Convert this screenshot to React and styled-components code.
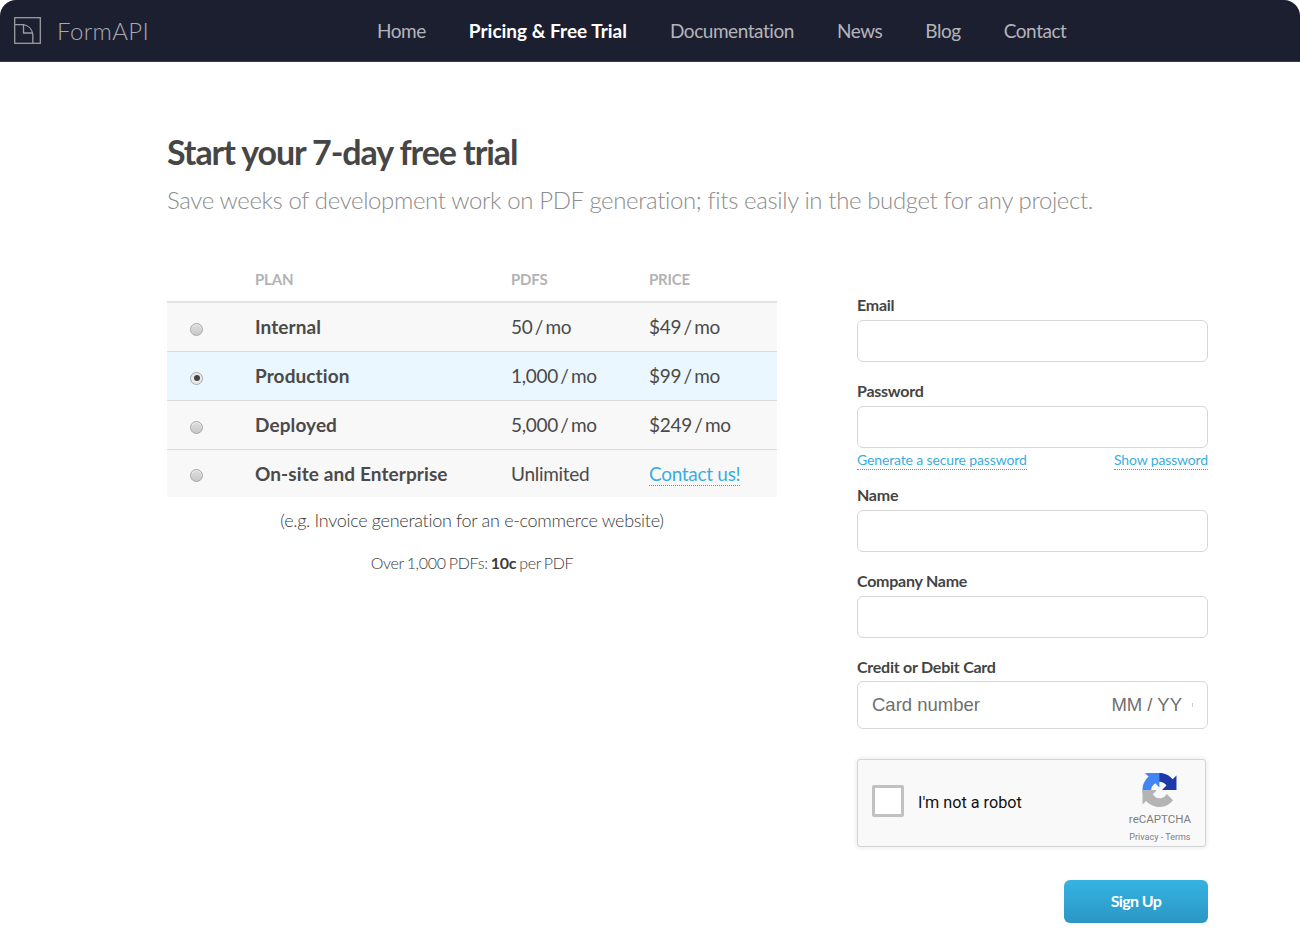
import React from "react";
import styled, { createGlobalStyle } from "styled-components";

const GlobalStyle = createGlobalStyle`
  html, body { margin: 0; padding: 0; background: #fff; }
  body { font-family: "Lato", "Open Sans", sans-serif; color: #444; }
  * { box-sizing: border-box; }
`;

const Page = styled.div`
  width: 1300px;
  height: 942px;
  overflow: hidden;
`;

// navbar
const NavBar = styled.header`
  height: 62px;
  background: #1c1f30;
  border-bottom: 1px solid #3a3c4b;
  border-radius: 16px 16px 0 0;
  display: flex;
  align-items: center;
  padding-left: 14px;
`;

const Brand = styled.div`
  width: 363px;
  display: flex;
  align-items: center;
  gap: 16px;
  color: #a9aab1;
  font-size: 24px;
  font-weight: 300;
  letter-spacing: 0.35px;
`;

const NavLinks = styled.nav`
  display: flex;
  gap: 43px;
`;

const NavLink = styled.a`
  font-size: 19px;
  letter-spacing: ${(p) => (p.$active ? "0" : "-0.45px")};
  font-weight: ${(p) => (p.$active ? 700 : 400)};
  color: ${(p) => (p.$active ? "#fff" : "#b4b5bb")};
`;

const Main = styled.main`
  padding: 68px 0 0 167px;
`;

const Title = styled.h1`
  margin: 0;
  font-size: 34px;
  line-height: 44px;
  font-weight: 700;
  color: #464646;
  letter-spacing: -1.07px;
`;

const Subtitle = styled.p`
  margin: 9px 0 0;
  font-size: 24px;
  line-height: 34px;
  font-weight: 300;
  color: #8c8c8c;
  letter-spacing: -0.38px;
`;

const Columns = styled.div`
  display: flex;
  align-items: flex-start;
  gap: 80px;
  margin-top: 43px;
`;

// pricing table
const PlanColumn = styled.section`
  width: 610px;
`;

const PlanTable = styled.table`
  width: 610px;
  border-collapse: collapse;
  table-layout: fixed;
`;

const HeadCell = styled.th`
  height: 42px;
  padding: 0 0 3px;
  text-align: left;
  font-size: 15px;
  font-weight: 700;
  color: #b3b3b3;
  text-transform: uppercase;
  letter-spacing: -0.2px;
  border-bottom: 2px solid #e4e4e4;
  vertical-align: middle;
`;

const Row = styled.tr`
  height: 49px;
  background: ${(p) => (p.$selected ? "#eaf7fe" : "#f8f8f8")};
  border-bottom: 1px solid #dcdcdc;
  &:last-child {
    height: 48px;
    border-bottom: 0;
  }
`;

const Cell = styled.td`
  padding: 0;
  font-size: 19px;
  font-weight: ${(p) => (p.$bold ? 700 : 400)};
  color: #4a4a4a;
  letter-spacing: ${(p) => (p.$bold ? "0.1px" : "-0.3px")};
  word-spacing: ${(p) => (p.$bold ? "0" : "-2.2px")};
`;

const RadioCell = styled.td`
  padding: 5px 0 0 23px;
`;

const Radio = styled.span`
  display: block;
  width: 13px;
  height: 13px;
  border-radius: 50%;
  border: 1px solid #a8a8a8;
  background: linear-gradient(#dedede, #c9c9c9);
  box-shadow: inset 0 1px 1px #eee;
  position: relative;
  ${(p) =>
    p.$checked &&
    `background: #e9e9e9;
     &::after {
       content: "";
       position: absolute;
       left: 2.5px;
       top: 2.5px;
       width: 6px;
       height: 6px;
       border-radius: 50%;
       background: #444;
     }`}
`;

const TextLink = styled.a`
  color: #38ade0;
  border-bottom: 1px dotted #2fa8dc;
  word-spacing: 0;
`;

const Note = styled.p`
  margin: ${(p) => p.$top}px 0 0;
  text-align: center;
  font-size: ${(p) => p.$size}px;
  line-height: 22px;
  font-weight: 300;
  color: #3c3c3c;
  letter-spacing: ${(p) => p.$track}px;
  word-spacing: ${(p) => p.$words}px;
  b { font-weight: 700; }
`;

// signup form
const Form = styled.form`
  width: 351px;
  padding-top: 34px;
`;

const Field = styled.div`
  margin-bottom: ${(p) => p.$gap ?? 18}px;
`;

const Label = styled.label`
  display: block;
  font-size: 16px;
  line-height: 22px;
  font-weight: 700;
  color: #444;
  letter-spacing: -0.25px;
  margin-bottom: 4px;
`;

const Input = styled.input`
  display: block;
  width: 351px;
  height: 42px;
  border: 1px solid #d6d6d6;
  border-radius: 6px;
  background: #fff;
  outline: 0;
`;

const PasswordLinks = styled.div`
  display: flex;
  justify-content: space-between;
  font-size: 14px;
  line-height: 19px;
  margin-top: 2px;
  letter-spacing: -0.14px;
`;

const CardBox = styled.div`
  height: 48px;
  margin-top: -1px;
  border: 1px solid #d6d6d6;
  border-radius: 6px;
  display: flex;
  align-items: center;
  padding: 0 14px;
  font-family: "Liberation Sans", sans-serif;
  font-size: 18.5px;
  color: #6f6f6f;
`;

const CardNumber = styled.span`
  flex: 1;
`;

const CardClip = styled.span`
  width: 1px;
  height: 4px;
  margin-left: 10px;
  background: #cfcfcf;
`;

const Captcha = styled.div`
  width: 349px;
  height: 88px;
  margin-top: 30px;
  background: #f9f9f9;
  border: 1px solid #d3d3d3;
  border-radius: 3px;
  box-shadow: 0 0 4px 1px rgba(0, 0, 0, 0.08);
  display: flex;
  align-items: center;
  padding: 0 14px;
  font-family: "Roboto", "Liberation Sans", sans-serif;
`;

const CaptchaBox = styled.span`
  width: 32px;
  height: 32px;
  margin-top: -4px;
  background: #fff;
  border: 3px solid #c1c1c1;
  border-radius: 2px;
`;

const CaptchaLabel = styled.span`
  margin: -2px 0 0 14px;
  font-size: 16.2px;
  color: #111;
  flex: 1;
`;

const CaptchaBrand = styled.div`
  display: flex;
  flex-direction: column;
  align-items: center;
  margin-top: 10px;
  color: #7d7d7d;
`;

const CaptchaName = styled.span`
  font-size: 11.5px;
  line-height: 14px;
  margin-top: 5px;
`;

const CaptchaTerms = styled.span`
  font-size: 9px;
  line-height: 12px;
  margin-top: 5px;
`;

const Actions = styled.div`
  display: flex;
  justify-content: flex-end;
  margin-top: 33px;
`;

const SignUp = styled.button`
  width: 144px;
  height: 43px;
  padding: 0 0 2px;
  border: 0;
  border-radius: 6px;
  background: linear-gradient(#36b3e2, #2b96c4);
  color: #fff;
  font-family: inherit;
  font-size: 16px;
  font-weight: 700;
  letter-spacing: -0.6px;
`;

const Logo = () => (
  <svg width="27" height="27" viewBox="0 0 27 27" fill="none" stroke="#9b9ca3" strokeWidth="1.3">
    <rect x="0.7" y="0.7" width="25.6" height="25.6" />
    <path d="M0.7 7.7H9.5C14 8.5 18 12 18.8 17V26.3" />
    <path d="M9.5 7.7V16H18.8" />
  </svg>
);

const RecaptchaLogo = () => (
  <svg width="35" height="34" viewBox="0 0 64 64">
    <path
      d="M64 31.955l-.033-1.37V4.687l-7.16 7.16C50.948 4.674 42.033.093 32.05.093c-10.4 0-19.622 4.96-25.458 12.64l11.736 11.86a15.55 15.55 0 0 1 4.754-5.334c2.05-1.6 4.952-2.906 8.968-2.906.485 0 .86.057 1.135.163 4.976.393 9.288 3.14 11.828 7.124l-8.307 8.307c10.522-.04 22.4-.066 27.295.005"
      fill="#1c3aa9"
    />
    <path
      d="M31.862.001l-1.37.033H4.594l7.16 7.16C4.58 13.053 0 21.968 0 31.95c0 10.4 4.96 19.622 12.64 25.458l11.86-11.736a15.55 15.55 0 0 1-5.334-4.754c-1.6-2.05-2.906-4.952-2.906-8.968 0-.485.057-.86.163-1.135.393-4.976 3.14-9.288 7.124-11.828l8.307 8.307c-.04-10.522-.066-22.4.005-27.295"
      fill="#4285f4"
    />
    <path
      d="M0 32.045l.033 1.37v25.898l7.16-7.16c5.858 7.173 14.773 11.754 24.755 11.754 10.4 0 19.622-4.96 25.458-12.64L45.67 39.407a15.55 15.55 0 0 1-4.754 5.334c-2.05 1.6-4.952 2.906-8.968 2.906-.485 0-.86-.057-1.135-.163-4.976-.393-9.288-3.14-11.828-7.124l8.307-8.307c-10.522.04-22.4.066-27.295-.005"
      fill="#b4b4b4"
    />
  </svg>
);

const plans = [
  { name: "Internal", pdfs: "50 / mo", price: "$49 / mo" },
  { name: "Production", pdfs: "1,000 / mo", price: "$99 / mo", selected: true },
  { name: "Deployed", pdfs: "5,000 / mo", price: "$249 / mo" },
  { name: "On-site and Enterprise", pdfs: "Unlimited", link: "Contact us!" },
];

export default function App() {
  return (
    <Page>
      <GlobalStyle />
      <NavBar>
        <Brand>
          <Logo />
          FormAPI
        </Brand>
        <NavLinks>
          <NavLink>Home</NavLink>
          <NavLink $active>Pricing &amp; Free Trial</NavLink>
          <NavLink>Documentation</NavLink>
          <NavLink>News</NavLink>
          <NavLink>Blog</NavLink>
          <NavLink>Contact</NavLink>
        </NavLinks>
      </NavBar>
      <Main>
        <Title>Start your 7-day free trial</Title>
        <Subtitle>
          Save weeks of development work on PDF generation; fits easily in the budget for any project.
        </Subtitle>
        <Columns>
          <PlanColumn>
            <PlanTable>
              <colgroup>
                <col width="88" />
                <col width="256" />
                <col width="138" />
                <col width="128" />
              </colgroup>
              <thead>
                <tr>
                  <HeadCell />
                  <HeadCell>Plan</HeadCell>
                  <HeadCell>PDFs</HeadCell>
                  <HeadCell>Price</HeadCell>
                </tr>
              </thead>
              <tbody>
                {plans.map((plan) => (
                  <Row key={plan.name} $selected={plan.selected}>
                    <RadioCell>
                      <Radio $checked={plan.selected} />
                    </RadioCell>
                    <Cell $bold>{plan.name}</Cell>
                    <Cell>{plan.pdfs}</Cell>
                    <Cell>{plan.link ? <TextLink>{plan.link}</TextLink> : plan.price}</Cell>
                  </Row>
                ))}
              </tbody>
            </PlanTable>
            <Note $size={18} $top={12} $track={-0.3} $words={0}>
              (e.g. Invoice generation for an e-commerce website)
            </Note>
            <Note $size={16} $top={21} $track={-0.3} $words={-1}>
              Over 1,000 PDFs: <b>10c</b> per PDF
            </Note>
          </PlanColumn>
          <Form>
            <Field>
              <Label>Email</Label>
              <Input />
            </Field>
            <Field $gap={14}>
              <Label>Password</Label>
              <Input />
              <PasswordLinks>
                <TextLink>Generate a secure password</TextLink>
                <TextLink>Show password</TextLink>
              </PasswordLinks>
            </Field>
            <Field>
              <Label>Name</Label>
              <Input />
            </Field>
            <Field>
              <Label>Company Name</Label>
              <Input />
            </Field>
            <Field $gap={0}>
              <Label>Credit or Debit Card</Label>
              <CardBox>
                <CardNumber>Card number</CardNumber>
                <span>MM / YY</span>
                <CardClip />
              </CardBox>
            </Field>
            <Captcha>
              <CaptchaBox />
              <CaptchaLabel>I'm not a robot</CaptchaLabel>
              <CaptchaBrand>
                <RecaptchaLogo />
                <CaptchaName>reCAPTCHA</CaptchaName>
                <CaptchaTerms>Privacy - Terms</CaptchaTerms>
              </CaptchaBrand>
            </Captcha>
            <Actions>
              <SignUp type="button">Sign Up</SignUp>
            </Actions>
          </Form>
        </Columns>
      </Main>
    </Page>
  );
}
